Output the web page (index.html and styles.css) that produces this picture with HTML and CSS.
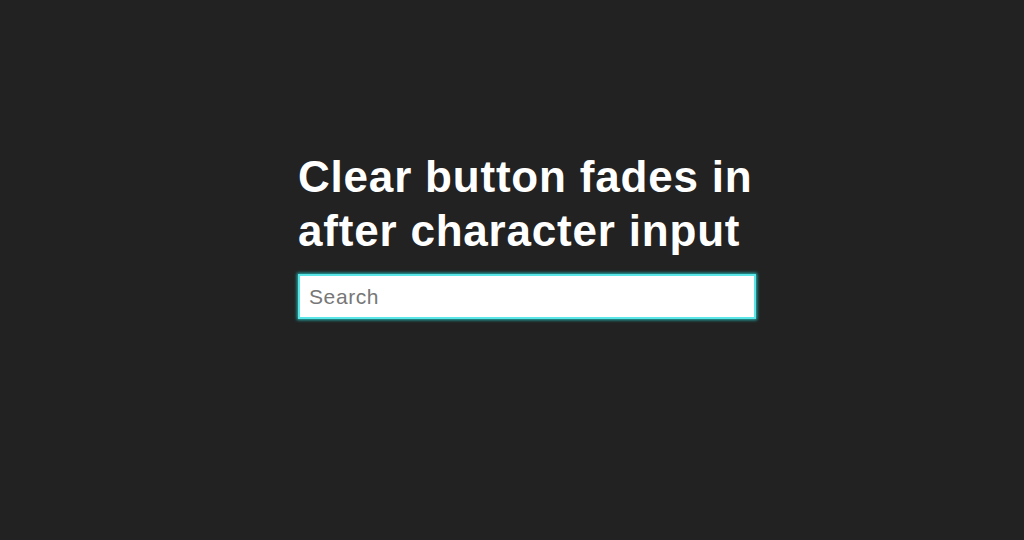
FILE: index.html
```html
<!DOCTYPE html>
<html>
<head>
<meta charset="utf-8">
<link rel="stylesheet" href="styles.css">
</head>
<body>
<main class="page">
  <section class="box">
    <h1 class="title"><span class="line">Clear button fades in</span> <span class="line">after character input</span></h1>
    <input class="search" type="text" placeholder="Search">
  </section>
</main>
</body>
</html>
```

FILE: styles.css
```css
html, body {
  margin: 0;
  height: 100%;
  background: #222222;
}
.page {
  height: 100%;
  display: flex;
  justify-content: center;
  align-items: flex-start;
  padding-left: 30px;
  padding-top: 150px;
  box-sizing: border-box;
}
.box {
  width: 458px;
  display: flex;
  flex-direction: column;
}
.title {
  margin: 0 0 16px 0;
  font-family: "Liberation Sans", Arial, sans-serif;
  font-weight: bold;
  font-size: 44px;
  line-height: 54px;
  letter-spacing: 0.8px;
  color: #ffffff;
}
.line {
  display: block;
  white-space: nowrap;
}
.search {
  box-sizing: border-box;
  width: 458px;
  height: 45px;
  border: 2px solid #5ae6e6;
  box-shadow: 0 0 3px 1px #22b4b4;
  background: #ffffff;
  outline: none;
  padding: 0 9px;
  font-family: "Liberation Sans", Arial, sans-serif;
  font-size: 21px;
  letter-spacing: 0.6px;
  color: #333;
}
.search::placeholder {
  color: #777777;
}
```
